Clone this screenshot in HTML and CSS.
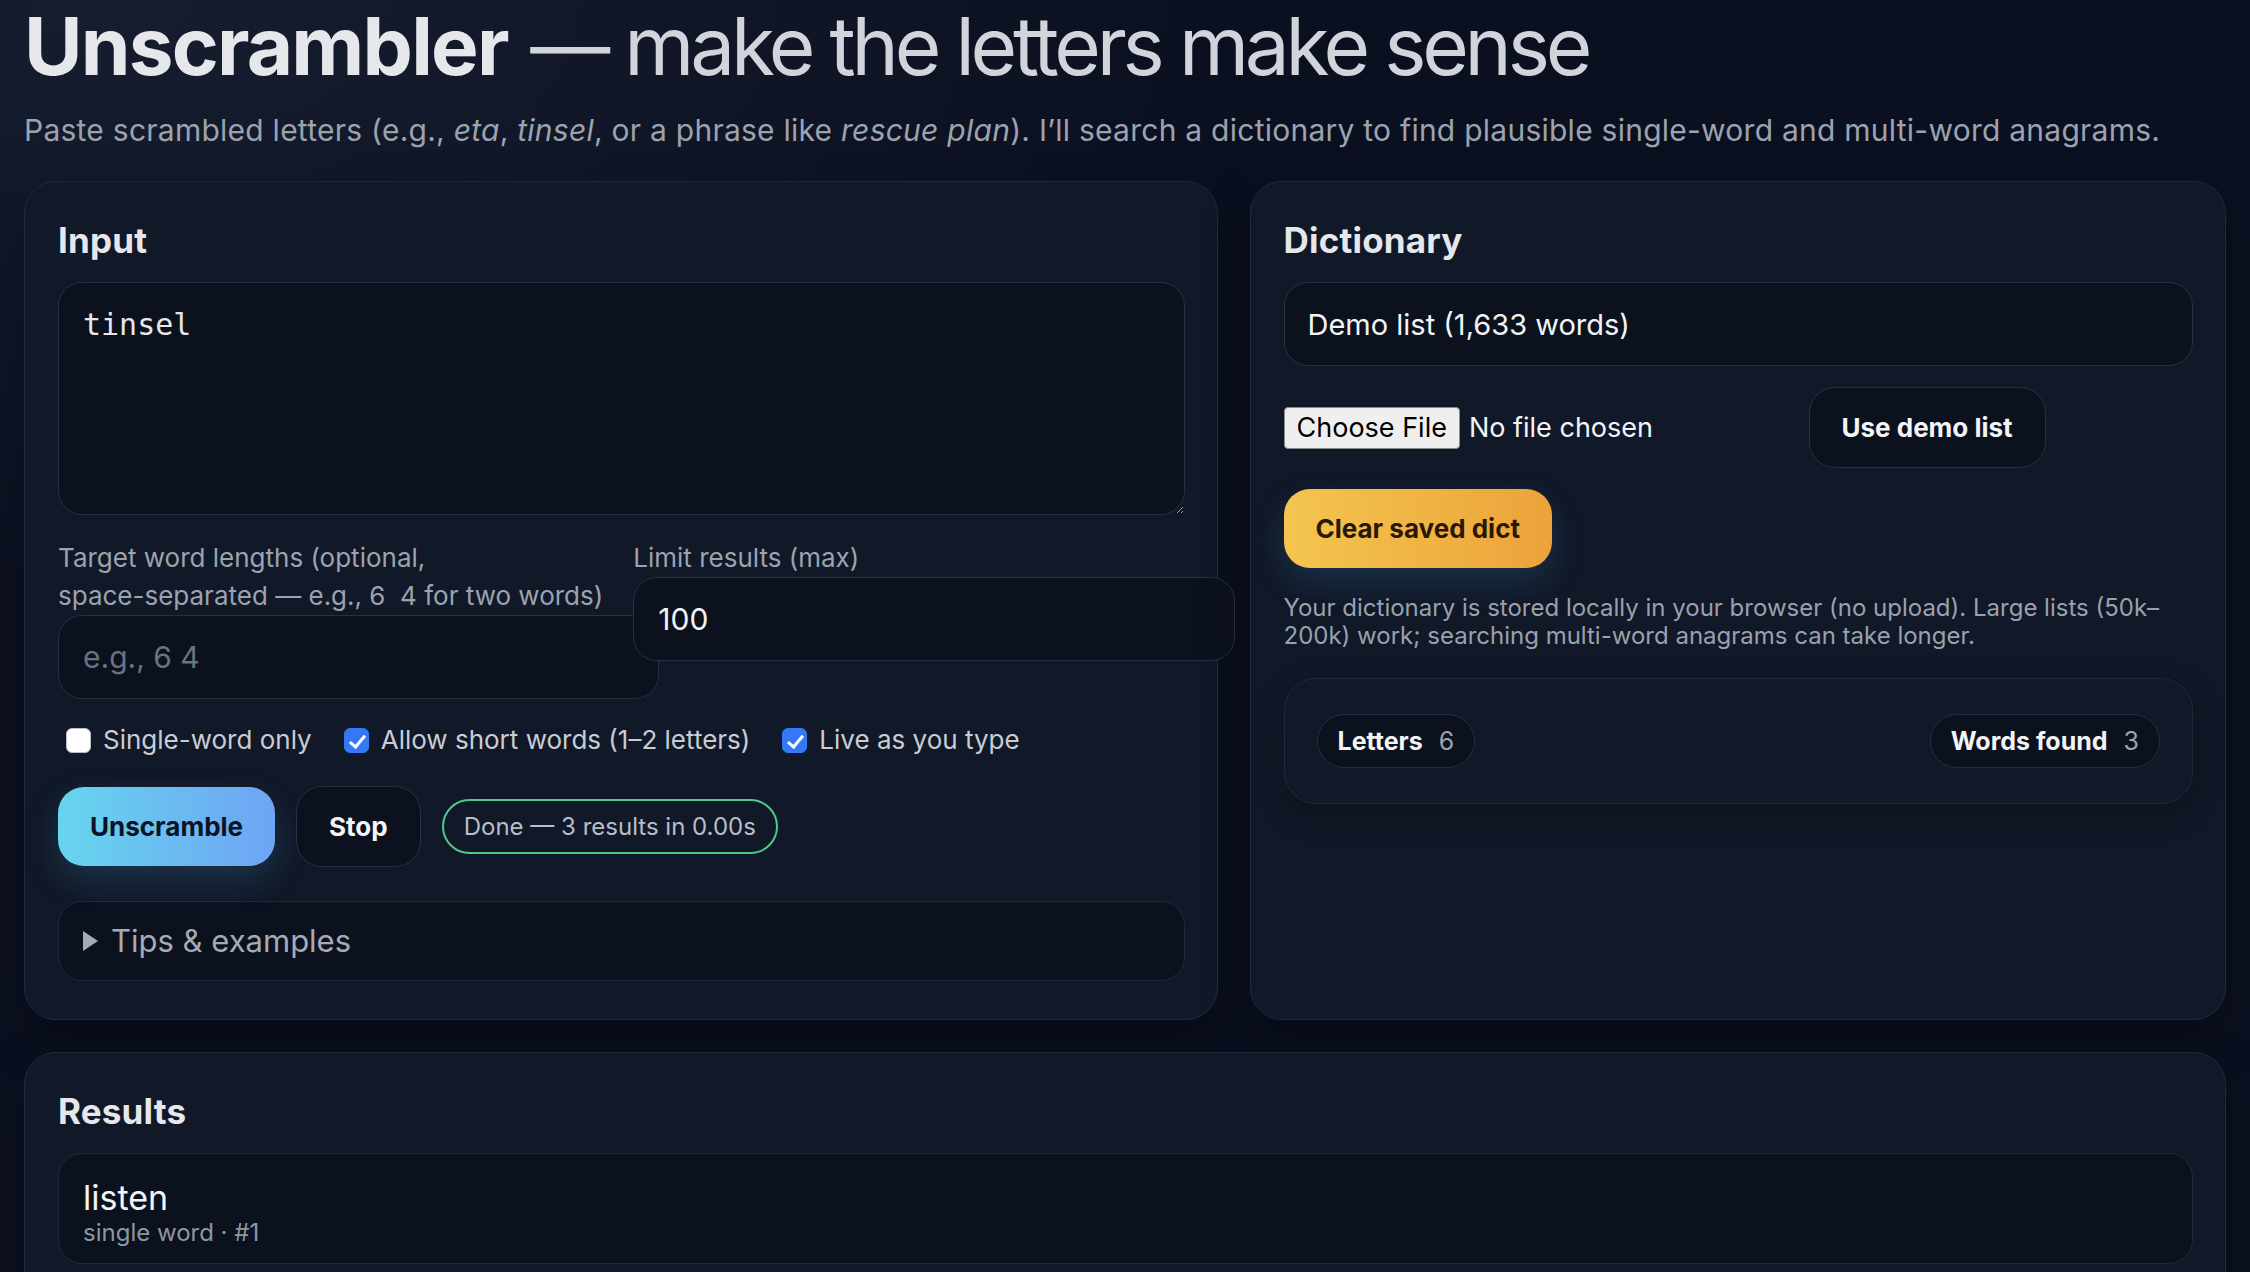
FILE: index.html
```html
<!DOCTYPE html>
<html lang="en">
<head>
    <meta charset="UTF-8">
    <meta name="viewport" content="width=device-width, initial-scale=1.0">
    <title>Unscrambler</title>
    <link rel="stylesheet" href="styles.css">
</head>
<body>
    <div class="page">
        <header class="header">
            <h1><strong>Unscrambler</strong> <span>— make the letters make sense</span></h1>
            <p class="lead">Paste scrambled letters (e.g., <em>eta</em>, <em>tinsel</em>, or a phrase like <em>rescue plan</em>). I’ll search a dictionary to find plausible single-word and multi-word anagrams.</p>
        </header>

        <main class="grid">
            <section class="card">
                <h2>Input</h2>
                <textarea class="letters" spellcheck="false">tinsel</textarea>

                <div class="fields">
                    <label class="field">Target word lengths (optional, <span class="nowrap">space-separated</span> — e.g., 6&nbsp; 4 for two words)
                        <input type="text" placeholder="e.g., 6 4">
                    </label>
                    <label class="field">Limit results (max)
                        <input type="text" value="100">
                    </label>
                </div>

                <div class="checks">
                    <label class="check"><input type="checkbox"> Single-word only</label>
                    <label class="check"><input type="checkbox" checked> Allow short words (1–2 letters)</label>
                    <label class="check"><input type="checkbox" checked> Live as you type</label>
                </div>

                <div class="actions">
                    <button class="btn btn-primary">Unscramble</button>
                    <button class="btn btn-ghost">Stop</button>
                    <span class="status">Done — 3 results in 0.00s</span>
                </div>

                <details class="tips">
                    <summary>Tips &amp; examples</summary>
                    <p>Try a phrase like “rescue plan” and set target lengths to find two-word anagrams.</p>
                </details>
            </section>

            <section class="card">
                <h2>Dictionary</h2>
                <select class="dict-select">
                    <option>Demo list (1,633 words)</option>
                </select>

                <div class="dict-row">
                    <label class="file">
                        <span class="file-btn">Choose File</span>
                        <span class="file-name">No file chosen</span>
                    </label>
                    <button class="btn btn-ghost">Use demo list</button>
                    <button class="btn btn-warn">Clear saved dict</button>
                </div>

                <p class="note">Your dictionary is stored locally in your browser (no upload). Large lists (50k–200k) work; searching multi-word anagrams can take longer.</p>

                <div class="stats">
                    <span class="pill"><b>Letters</b> <span>6</span></span>
                    <span class="pill"><b>Words found</b> <span>3</span></span>
                </div>
            </section>

            <section class="card results">
                <h2>Results</h2>
                <div class="result-list">
                    <div class="result">
                        <div class="word">listen</div>
                        <div class="meta">single word · #1</div>
                    </div>
                    <div class="result">
                        <div class="word">silent</div>
                        <div class="meta">single word · #2</div>
                    </div>
                    <div class="result">
                        <div class="word">enlist</div>
                        <div class="meta">single word · #3</div>
                    </div>
                </div>
            </section>
        </main>
    </div>
</body>
</html>
```

FILE: styles.css
```css
:root {
    --bg: #0a0f1e;
    --card: #111827;
    --line: #212938;
    --field: #0c111e;
    --text: #e5e7eb;
    --muted: #9ca3af;
}

body {
    margin: 0;
    min-height: 100vh;
    background: radial-gradient(1500px 800px at 5% 0%, #161d2e 0%, #0b1020 75%) var(--bg);
    color: var(--text);
    font-family: Inter, "Noto Sans", "Liberation Sans", sans-serif;
}

.page {
    padding: 6px 24px 24px;
}

.header h1 {
    margin: 0;
    font-size: 80px;
    line-height: 80px;
    font-weight: 400;
    color: #d1d5db;
}

.header h1 strong {
    font-weight: 700;
    letter-spacing: -1.8px;
    color: #e5e7eb;
}

.header h1 span {
    letter-spacing: -4.2px;
}

.lead {
    margin: 23px 0 0;
    font-size: 30px;
    line-height: 42px;
    letter-spacing: 0.25px;
    color: var(--muted);
}

.nowrap {
    white-space: nowrap;
}

.grid {
    display: grid;
    grid-template-columns: 11fr 9fr;
    gap: 32px;
    margin-top: 30px;
}

.card {
    min-width: 0;
    background: var(--card);
    border: 1px solid var(--line);
    border-radius: 32px;
    padding: 38px 32px 38px 33px;
    box-shadow: 0 20px 50px rgba(0, 0, 0, 0.25);
}

.card h2 {
    margin: 0 0 21px;
    font-size: 35px;
    line-height: 41px;
    font-weight: 700;
    letter-spacing: 0.2px;
    color: #e5e7eb;
}

.results {
    grid-column: 1 / -1;
}

/* input card */
.letters {
    display: block;
    width: 100%;
    height: 233px;
    box-sizing: border-box;
    margin: 0;
    padding: 24px;
    background: var(--field);
    border: 1px solid #283041;
    border-radius: 24px;
    color: #e5e7eb;
    font: 30px/36px "DejaVu Sans Mono", monospace;
    resize: vertical;
    outline: none;
}

.fields {
    display: grid;
    grid-template-columns: 1fr 1fr;
    gap: 24px;
    margin-top: 24px;
    align-items: start;
}

.field {
    display: block;
    min-width: 0;
    font-size: 26px;
    line-height: 38px;
    color: var(--muted);
}

.field input {
    display: block;
    width: 100%;
    height: 34px;
    margin: 0;
    padding: 24px;
    background: var(--field);
    border: 1px solid #283041;
    border-radius: 24px;
    color: #f3f4f6;
    font: 30px Inter, sans-serif;
    outline: none;
}

.field input::placeholder {
    color: #6b7280;
}

.checks {
    display: flex;
    gap: 24px;
    margin-top: 24px;
    font-size: 26px;
    line-height: 34px;
    color: #c8cdd5;
}

.check {
    display: inline-flex;
    align-items: center;
    gap: 12px;
}

.check input {
    appearance: none;
    position: relative;
    width: 25px;
    height: 25px;
    margin: 0 0 0 8px;
    background: #fff;
    border: 1px solid #b9bdc4;
    border-radius: 6px;
}

.check input:checked {
    background: #3478f6;
    border-color: #3478f6;
}

.check input:checked::after {
    content: "";
    position: absolute;
    left: 8px;
    top: 3px;
    width: 6px;
    height: 13px;
    border: solid #fff;
    border-width: 0 3px 3px 0;
    transform: rotate(40deg);
}

.actions {
    display: flex;
    align-items: center;
    gap: 21px;
    margin-top: 29px;
}

.btn {
    margin: 0;
    padding: 22px 32px;
    border: 0;
    border-radius: 26px;
    font: 700 26px/35px Inter, sans-serif;
    cursor: pointer;
}

.btn-primary {
    background: linear-gradient(90deg, #67d5ee, #6ea4f4);
    color: #0b1324;
    box-shadow: 0 14px 34px rgba(70, 160, 220, 0.2);
}

.btn-ghost {
    background: var(--field);
    border: 1px solid #283041;
    color: #f3f4f6;
}

.btn-warn {
    background: linear-gradient(90deg, #f4c54f, #eca33a);
    color: #2a1804;
    box-shadow: 0 14px 34px rgba(70, 160, 220, 0.18);
}

.status {
    padding: 11px 20px;
    border: 2px solid #4fc98b;
    border-radius: 999px;
    font-size: 24px;
    line-height: 29px;
    color: #b8bec9;
}

.tips {
    margin-top: 34px;
    padding: 20px 24px;
    background: var(--field);
    border: 1px solid var(--line);
    border-radius: 24px;
    color: #a5abb6;
}

.tips summary {
    display: flex;
    align-items: center;
    gap: 13px;
    list-style: none;
    font-size: 31px;
    line-height: 38px;
    cursor: pointer;
}

.tips summary::-webkit-details-marker {
    display: none;
}

.tips summary::before {
    content: "";
    border-left: 15px solid currentColor;
    border-top: 10px solid transparent;
    border-bottom: 10px solid transparent;
}

.tips p {
    margin: 16px 0 0;
    font-size: 26px;
}

/* dictionary card */
.dict-select {
    display: block;
    width: 100%;
    height: 84px;
    box-sizing: border-box;
    margin: 0;
    padding: 0 23px;
    appearance: none;
    background: var(--field);
    border: 1px solid #283041;
    border-radius: 24px;
    color: #f3f4f6;
    font: 29px Inter, sans-serif;
    outline: none;
}

.dict-row {
    display: flex;
    flex-wrap: wrap;
    align-items: center;
    gap: 21px;
    margin-top: 21px;
}

.file {
    display: inline-flex;
    align-items: center;
    gap: 9px;
    width: 504px;
    font-size: 27px;
    color: #f3f4f6;
}

.file-btn {
    padding: 0 12px;
    line-height: 40px;
    background: #efefef;
    border: 1px solid #8c8c8c;
    border-radius: 4px;
    color: #000;
}

.note {
    margin: 26px 0 0;
    font-size: 24px;
    line-height: 28px;
    color: #9aa1ad;
}

.stats {
    display: flex;
    justify-content: space-between;
    align-items: center;
    margin-top: 28px;
    padding: 35px 32px;
    background: var(--card);
    border: 1px solid var(--line);
    border-radius: 32px;
    box-shadow: 0 10px 30px rgba(0, 0, 0, 0.25);
}

.pill {
    display: inline-flex;
    align-items: center;
    gap: 16px;
    height: 54px;
    box-sizing: border-box;
    padding: 0 20px;
    background: var(--field);
    border: 1px solid #262e3d;
    border-radius: 999px;
    font-size: 25px;
}

.pill b {
    color: #f3f4f6;
}

.pill span {
    color: var(--muted);
}

/* results */
.result-list {
    display: flex;
    flex-direction: column;
    gap: 16px;
}

.result {
    padding: 23px 24px 16px;
    background: var(--field);
    border: 1px solid var(--line);
    border-radius: 24px;
}

.result .word {
    font-size: 34px;
    line-height: 41px;
    color: #f3f4f6;
}

.result .meta {
    font-size: 24px;
    line-height: 29px;
    color: #8e96a3;
}
```
